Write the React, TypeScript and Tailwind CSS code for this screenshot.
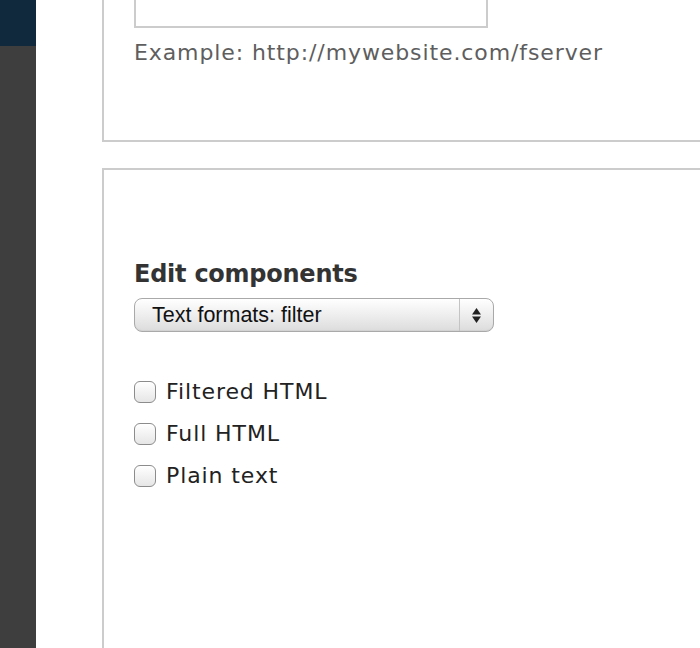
const formats = ["Filtered HTML", "Full HTML", "Plain text"];

function SelectArrows() {
  return (
    <svg width="11" height="17" viewBox="0 0 11 17">
      <path d="M5.5 1 L10 7.5 L1 7.5 Z" fill="#222" />
      <path d="M5.5 16 L10 9.5 L1 9.5 Z" fill="#222" />
    </svg>
  );
}

export default function App() {
  return (
    <div className="flex h-[648px] w-[700px] overflow-hidden bg-white font-['DejaVu_Sans',sans-serif]">
      <aside className="flex w-[36px] shrink-0 flex-col bg-[#3e3e3e]">
        <div className="h-[46px] bg-[#10293c]" />
      </aside>

      <main className="flex-1 pl-[66px]">
        {/* server settings panel */}
        <section className="-mt-[2px] h-[144px] w-[640px] border-2 border-l-2 border-r-0 border-[#cccccc] pl-[30px]">
          <div className="h-[28px] w-[354px] border-2 border-t-0 border-[#cccccc]" />
          <p className="mt-[10px] text-[22px] leading-[30px] tracking-[0.9px] text-[#5e5e5e]">
            Example: http://mywebsite.com/fserver
          </p>
        </section>

        {/* component settings panel */}
        <section className="mt-[26px] h-[500px] w-[640px] border-t-2 border-l-2 border-[#cccccc] pl-[30px] pt-[89px]">
          <h2 className="text-[24px] font-bold leading-[30px] tracking-[-0.25px] text-[#333333]">Edit components</h2>
          <div className="mt-[9px] flex h-[34px] w-[360px] items-center rounded-[8px] border border-[#a9a9a9] bg-gradient-to-b from-[#ffffff] via-[#eeeeee] to-[#dcdcdc] shadow-[inset_0_-1px_1px_rgba(0,0,0,0.05)]">
            <span className="flex-1 pl-[17px] font-['Liberation_Sans',sans-serif] text-[21.5px] text-[#111111]">
              Text formats: filter
            </span>
            <span className="flex h-full w-[34px] items-center justify-center border-l border-[#c4c4c4]">
              <SelectArrows />
            </span>
          </div>

          <ul className="mt-[48px] flex flex-col gap-[19px]">
            {formats.map((f) => (
              <li key={f} className="flex items-center gap-[10px]">
                <span className="h-[22px] w-[22px] rounded-[6px] border border-[#8c8c8c] bg-gradient-to-b from-[#ffffff] to-[#e6e6e6] shadow-[inset_0_1px_1px_rgba(255,255,255,0.8)]" />
                <span className="text-[22px] leading-[23px] tracking-[0.9px] text-[#222222]">{f}</span>
              </li>
            ))}
          </ul>
        </section>
      </main>
    </div>
  );
}
